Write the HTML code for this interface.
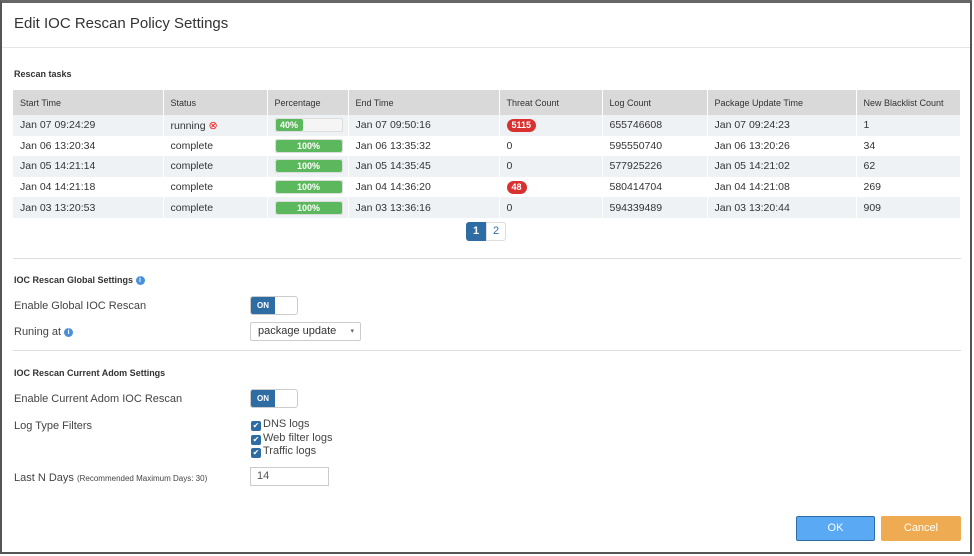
<!DOCTYPE html><html><head><style>
*{box-sizing:border-box;margin:0;padding:0}
body{width:974px;height:556px;background:#fff;position:relative;overflow:hidden;font-family:"Liberation Sans",sans-serif;color:#333}
.frame{position:absolute;left:0;top:0;width:972px;height:554px;border:2px solid #555;border-top:3px solid #666;background:#fff}
.a{position:absolute;white-space:nowrap}
.title{left:14px;top:15px;font-size:15px;color:#333}
.hr{position:absolute;height:1px;background:#ddd}
.h{font-size:9px;font-weight:bold;color:#333}
.l{font-size:11px;color:#444}
table{position:absolute;left:13px;top:90px;width:948px;border-collapse:collapse;font-size:10.5px;color:#333}
th{background:#d9d9d9;height:25px;text-align:left;font-weight:normal;font-size:9px;padding-left:7px;border-right:1px solid #fff;color:#333}
td{height:20.6px;padding-left:7px;border-right:1px solid #fff}
tr:nth-child(even) td{background:#eef2f5}
tr:nth-child(odd) td{background:#fff}
.bar{width:68px;height:14px;background:#f5f5f5;border:1px solid #ddd;border-radius:2px;position:relative}
.bar i{position:absolute;left:0;top:0;bottom:0;background:#5cb85c;color:#fff;font-style:normal;font-size:9px;font-weight:bold;text-align:center;line-height:13px;border-radius:2px}
.badge{display:inline-block;background:#d9312f;color:#fff;font-size:9px;font-weight:bold;border-radius:8px;padding:0 5px;line-height:13px}
.tog{position:absolute;width:48px;height:19px;border:1px solid #ccc;border-radius:3px;background:#fff}
.tog span{position:absolute;left:0;top:0;width:24px;height:17px;background:#2e6da4;color:#fff;font-size:8px;font-weight:bold;text-align:center;line-height:17px;border-radius:2px 0 0 2px}
.info{display:inline-block;width:9px;height:9px;border-radius:50%;background:#4a90d9;color:#fff;font-size:7px;text-align:center;line-height:9px;vertical-align:1px;font-weight:bold}
.cb{display:inline-block;width:10px;height:10px;background:#2e6da4;border-radius:2px;color:#fff;font-size:8px;line-height:10px;text-align:center;margin-right:2px;vertical-align:-1px}
.btn{position:absolute;height:25px;color:#fff;font-size:11px;text-align:center;line-height:23px;border-radius:2px}
</style></head><body><div class="frame"></div>
<div class="a title">Edit IOC Rescan Policy Settings</div>
<div class="hr" style="left:2px;top:47px;width:968px;background:#e5e5e5"></div>
<div class="a h" style="left:14px;top:69px">Rescan tasks</div>
<table>
<tr><th style="width:150px">Start Time</th><th style="width:104px">Status</th><th style="width:81px">Percentage</th><th style="width:151px">End Time</th><th style="width:103px">Threat Count</th><th style="width:105px">Log Count</th><th style="width:149px">Package Update Time</th><th>New Blacklist Count</th></tr>
<tr><td>Jan 07 09:24:29</td><td>running <span style="color:#e22;font-size:11px">⊗</span></td><td><div class="bar"><i style="width:27px">40%</i></div></td><td>Jan 07 09:50:16</td><td><span class="badge">5115</span></td><td>655746608</td><td>Jan 07 09:24:23</td><td>1</td></tr>
<tr><td>Jan 06 13:20:34</td><td>complete</td><td><div class="bar"><i style="width:100%">100%</i></div></td><td>Jan 06 13:35:32</td><td>0</td><td>595550740</td><td>Jan 06 13:20:26</td><td>34</td></tr>
<tr><td>Jan 05 14:21:14</td><td>complete</td><td><div class="bar"><i style="width:100%">100%</i></div></td><td>Jan 05 14:35:45</td><td>0</td><td>577925226</td><td>Jan 05 14:21:02</td><td>62</td></tr>
<tr><td>Jan 04 14:21:18</td><td>complete</td><td><div class="bar"><i style="width:100%">100%</i></div></td><td>Jan 04 14:36:20</td><td><span class="badge">48</span></td><td>580414704</td><td>Jan 04 14:21:08</td><td>269</td></tr>
<tr><td>Jan 03 13:20:53</td><td>complete</td><td><div class="bar"><i style="width:100%">100%</i></div></td><td>Jan 03 13:36:16</td><td>0</td><td>594339489</td><td>Jan 03 13:20:44</td><td>909</td></tr>
</table>
<div class="a" style="left:466px;top:222px;width:20px;height:19px;background:#2e6da4;color:#fff;font-size:11px;font-weight:bold;text-align:center;line-height:19px;border-radius:3px 0 0 3px">1</div>
<div class="a" style="left:486px;top:222px;width:20px;height:19px;border:1px solid #ddd;color:#2e6da4;font-size:11px;text-align:center;line-height:17px;border-radius:0 3px 3px 0">2</div>
<div class="hr" style="left:13px;top:258px;width:948px"></div>
<div class="a h" style="left:14px;top:275px">IOC Rescan Global Settings <span class="info">i</span></div>
<div class="a l" style="left:14px;top:300px">Enable Global IOC Rescan</div>
<div class="tog" style="left:250px;top:296px"><span>ON</span></div>
<div class="a l" style="left:14px;top:326px">Runing at <span class="info">i</span></div>
<div class="a" style="left:250px;top:322px;width:111px;height:19px;border:1px solid #ccc;border-radius:2px;font-size:11px;padding-left:7px;line-height:17px">package update<span style="position:absolute;right:6px;font-size:7px;color:#666">▾</span></div>
<div class="hr" style="left:13px;top:350px;width:948px"></div>
<div class="a h" style="left:14px;top:368px">IOC Rescan Current Adom Settings</div>
<div class="a l" style="left:14px;top:393px">Enable Current Adom IOC Rescan</div>
<div class="tog" style="left:250px;top:389px"><span>ON</span></div>
<div class="a l" style="left:14px;top:420px">Log Type Filters</div>
<div class="a l" style="left:251px;top:418px;line-height:13.5px"><span class="cb">✔</span>DNS logs<br><span class="cb">✔</span>Web filter logs<br><span class="cb">✔</span>Traffic logs</div>
<div class="a l" style="left:14px;top:472px">Last N Days <span style="font-size:8px">(Recommended Maximum Days: 30)</span></div>
<div class="a" style="left:250px;top:467px;width:79px;height:19px;border:1px solid #ccc;font-size:11px;padding-left:6px;line-height:17px;color:#555">14</div>
<div class="btn" style="left:796px;top:516px;width:79px;background:#5aa9f5;border:1px solid #2e6da4">OK</div>
<div class="btn" style="left:881px;top:516px;width:80px;background:#efab52;border:1px solid #efab52">Cancel</div>
</body></html>
